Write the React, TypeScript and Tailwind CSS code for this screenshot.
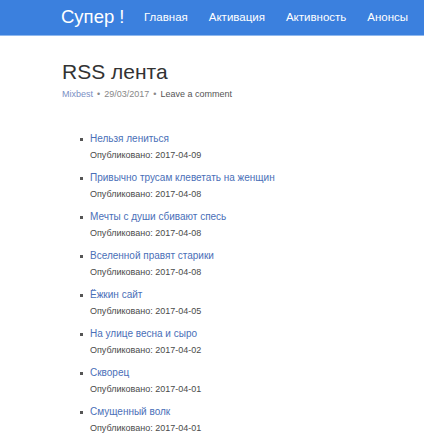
import React from "react";

const items = [
  ["Нельзя лениться", "2017-04-09"],
  ["Привычно трусам клеветать на женщин", "2017-04-08"],
  ["Мечты с души сбивают спесь", "2017-04-08"],
  ["Вселенной правят старики", "2017-04-08"],
  ["Ёжкин сайт", "2017-04-05"],
  ["На улице весна и сыро", "2017-04-02"],
  ["Скворец", "2017-04-01"],
  ["Смущенный волк", "2017-04-01"],
];

export default function App() {
  return (
    <div className="w-[424px] h-[443px] bg-white overflow-hidden" style={{ fontFamily: '"Liberation Sans", Arial, sans-serif' }}>
      <div className="h-[36px] bg-[#3b80de] border-b border-[#8fb8ee] flex items-center pl-[61px]">
        <span className="w-[83px] text-white text-[18.5px] leading-none">Супер !</span>
        <nav className="flex gap-[21px] text-white text-[11.5px] leading-none">
          <span>Главная</span>
          <span>Активация</span>
          <span>Активность</span>
          <span>Анонсы</span>
        </nav>
      </div>
      <div className="pl-[62px] pt-[25px]">
        <h1 className="text-[21px] leading-none text-[#333]">RSS лента</h1>
        <div className="mt-[7px] text-[9px] leading-[11px] text-[#888] flex items-center gap-[4px]">
          <span className="text-[#7a8fc4]">Mixbest</span>
          <span>•</span>
          <span>29/03/2017</span>
          <span>•</span>
          <span className="text-[#555]">Leave a comment</span>
        </div>
        <ul className="mt-[33px] pl-[28px] flex flex-col gap-[11px]">
          {items.map(([t, d]) => (
            <li key={t} className="relative">
              <span className="absolute left-[-10px] top-[5px] w-[3px] h-[3px] bg-[#555]" />
              <div className="text-[10px] leading-[12px] text-[#4a6fb8]">{t}</div>
              <div className="mt-[5px] text-[9px] leading-[11px] text-[#4a4a4a]">Опубликовано: {d}</div>
            </li>
          ))}
        </ul>
      </div>
    </div>
  );
}
